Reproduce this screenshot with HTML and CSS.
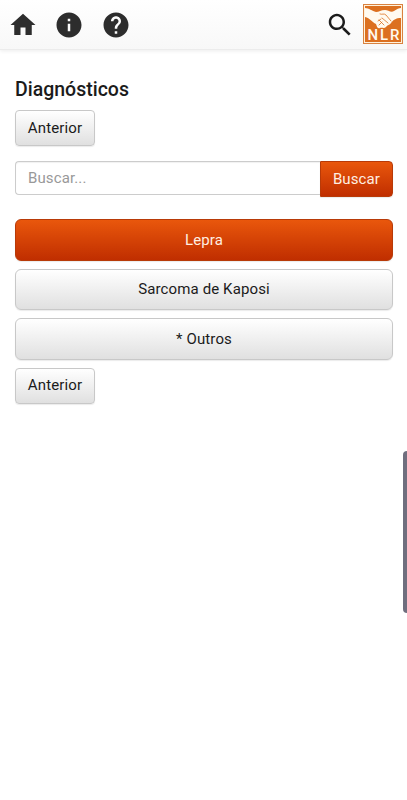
FILE: index.html
```html
<!DOCTYPE html>
<html lang="pt">
<head>
<meta charset="utf-8">
<title>Diagnósticos</title>
<link rel="stylesheet" href="styles.css">
</head>
<body>
<header class="navbar">
  <nav class="nav-links">
    <svg class="icon" viewBox="0 0 24 24"><path d="M10 20v-6h4v6h5v-8h3L12 3 2 12h3v8z"/></svg>
    <svg class="icon" viewBox="0 0 24 24"><path d="M12 2C6.480 2 2 6.480 2 12s4.480 10 10 10 10-4.480 10-10S17.520 2 12 2zm1 15h-2v-6h2v6zm0-8h-2V7h2v2z"/></svg>
    <svg class="icon" viewBox="0 0 24 24"><path d="M12 2C6.480 2 2 6.480 2 12s4.480 10 10 10 10-4.480 10-10S17.520 2 12 2zm1 17h-2v-2h2v2zm2.070-7.750l-.9.920C13.450 12.900 13 13.500 13 15h-2v-.5c0-1.100.450-2.100 1.170-2.830l1.240-1.260c.370-.360.590-.860.590-1.410 0-1.100-.9-2-2-2s-2 .9-2 2H8c0-2.210 1.790-4 4-4s4 1.790 4 4c0 .880-.360 1.680-.930 2.250z"/></svg>
  </nav>
  <svg class="icon search" viewBox="0 0 24 24"><path d="M15.500 14h-.790l-.280-.270C15.410 12.590 16 11.110 16 9.500 16 5.910 13.090 3 9.500 3S3 5.910 3 9.500 5.910 16 9.500 16c1.610 0 3.090-.590 4.230-1.570l.270.280v.790l5 4.990L20.490 19l-4.990-5zm-6 0C7.010 14 5 11.990 5 9.500S7.010 5 9.500 5 14 7.010 14 9.500 11.990 14 9.500 14z"/></svg>
  <svg class="logo" viewBox="0 0 40 40">
    <rect width="40" height="40" fill="#d98240"/>
    <rect x="1.500" y="1.500" width="37" height="37" fill="#dc7020" stroke="#fff2dc"/>
    <path fill="#fffaf0" d="M2 4 C6 4 9 7 13 8 C16 8 18 6 22 6 C25 6 28 9 31 7 C34 5 36 4 38 4 V14 C33 14 30 16 28 19 C27 21 24 21 23 23 C21 25 19 23 17 24 C14 25 14 22 13 20 C9 18 7 14 2 13Z"/>
    <path fill="none" stroke="#dc7020" stroke-width=".8" stroke-linecap="round" d="M17 10 C19 11 21 9 23 11 L28 17 M19 14 L25 19 M16 16 L21 21 M15 17 L18 15 M16 21 L19 18"/>
    <text class="logo-text" x="4.500" y="36" textLength="32" lengthAdjust="spacing">NLR</text>
  </svg>
</header>
<main class="content">
  <h1 class="title">Diagnósticos</h1>
  <button class="btn">Anterior</button>
  <form class="search-row">
    <input class="field" type="text" placeholder="Buscar...">
    <button class="btn primary submit" type="button">Buscar</button>
  </form>
  <div class="options">
    <button class="btn large primary">Lepra</button>
    <button class="btn large">Sarcoma de Kaposi</button>
    <button class="btn large">* Outros</button>
  </div>
  <button class="btn">Anterior</button>
</main>
<div class="edge-handle"></div>
</body>
</html>
```
FILE: styles.css
```css
* { box-sizing: border-box; }
body {
  margin: 0;
  height: 800px;
  overflow: hidden;
  background: #fff;
  color: #1b1b1b;
  font-family: Roboto, sans-serif;
}
.navbar {
  display: flex;
  align-items: flex-start;
  height: 50px;
  padding: 4px 4px 0 8px;
  background: linear-gradient(#fff, #f8f8f8);
  border-bottom: 1px solid #ececec;
  box-shadow: 0 1px 4px rgba(0, 0, 0, .08);
}
.nav-links { display: flex; gap: 16.400px; }
.icon { width: 30px; height: 30px; margin-top: 6px; fill: #2d2d2d; }
.search { margin-left: auto; fill: #1c1c1c; }
.logo { width: 40px; height: 40px; margin-left: 8px; }
.logo-text { font: 500 15px Roboto, sans-serif; fill: #fffaf0; }
.content { padding: 29px 14px 0 15px; }
.title {
  margin: 0 0 9px;
  font-size: 19.500px;
  line-height: 22px;
  font-weight: 500;
}
.btn {
  display: block;
  width: 80px;
  height: 36px;
  padding: 0 0 1px;
  border: 1px solid #c8c8c8;
  border-radius: 4px;
  background: linear-gradient(#fff, #e0e0e0);
  box-shadow: 0 1px 1px rgba(0, 0, 0, .08);
  color: #1b1b1b;
  font: 400 15px/20px Roboto, sans-serif;
  letter-spacing: .12px;
}
.primary {
  border-color: #b83a08;
  background: linear-gradient(#e9570c, #c02e00);
  color: #ffefe2;
}
.search-row { display: flex; margin: 15px 0 22px; }
.field {
  flex: 1;
  min-width: 0;
  height: 34px;
  padding: 0 12px 1px;
  border: 1px solid #ccc;
  border-right: 0;
  border-radius: 4px 0 0 4px;
  box-shadow: inset 0 1px 1px rgba(0, 0, 0, .06);
  font: 400 15px/20px Roboto, sans-serif;
  letter-spacing: .12px;
}
.field::placeholder { color: #999; }
.submit { width: 73px; border-radius: 0 4px 4px 0; }
.options { display: grid; gap: 7.800px; margin-bottom: 7.600px; }
.large { width: 100%; height: 41.800px; padding: 0; border-radius: 6px; }
.edge-handle {
  position: absolute;
  top: 451px;
  right: 0;
  width: 4px;
  height: 162px;
  border-radius: 4px 0 0 4px;
  background: #6f6e7e;
}
```
